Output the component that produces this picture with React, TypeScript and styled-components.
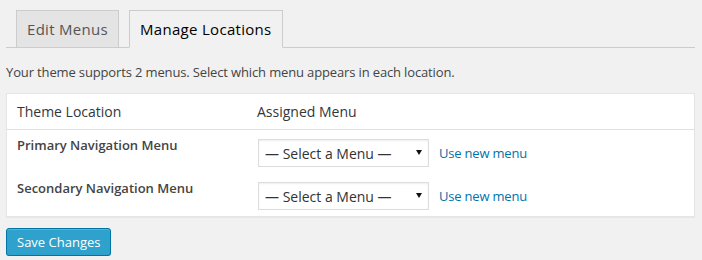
import React from "react";
import styled, { createGlobalStyle } from "styled-components";

const Global = createGlobalStyle`
  html, body { margin: 0; padding: 0; background: #f1f1f1; }
  body { font-family: "Open Sans", "Noto Sans", sans-serif; color: #444; font-size: 13px; }
`;

const Page = styled.div`
  padding: 0 7px 0 6px;
`;

const TabBar = styled.div`
  display: flex;
  gap: 10px;
  padding: 10px 0 0 10px;
  border-bottom: 1px solid #ccc;
`;

const Tab = styled.a<{ $active?: boolean }>`
  display: block;
  margin-bottom: -1px;
  padding: 6px 10px;
  line-height: 24px;
  font-size: 15px;
  letter-spacing: 0.3px;
  border: 1px solid #ccc;
  border-bottom-color: ${(p) => (p.$active ? "#f1f1f1" : "#ccc")};
  background: ${(p) => (p.$active ? "#f1f1f1" : "#e4e4e4")};
  color: ${(p) => (p.$active ? "#000" : "#555")};
  text-decoration: none;
  cursor: pointer;
`;

const Description = styled.p`
  margin: 14px 0 11px;
  line-height: 20px;
  font-size: 13px;
  letter-spacing: -0.14px;
  color: #444;
`;

const Table = styled.table`
  width: 100%;
  border-collapse: separate;
  border-spacing: 0;
  background: #fff;
  border: 1px solid #e5e5e5;
  box-shadow: 0 1px 1px rgba(0, 0, 0, 0.04);
`;

const HeadCell = styled.th<{ $w?: number }>`
  text-align: left;
  font-weight: 400;
  font-size: 14px;
  line-height: 19px;
  padding: 8px 10px;
  color: #32373c;
  border-bottom: 1px solid #e1e1e1;
  width: ${(p) => (p.$w ? `${p.$w}px` : "auto")};
`;

const RowLabel = styled.th`
  text-align: left;
  vertical-align: top;
  font-weight: 600;
  font-size: 13px;
  line-height: 19.5px;
  padding: 6px 10px;
  color: #444;
`;

const Cell = styled.td`
  vertical-align: top;
  padding: 9px 10px 6px 11px;
`;

const Controls = styled.div`
  display: flex;
  align-items: center;
  gap: 10px;
`;

const SelectWrap = styled.div`
  position: relative;
  width: 171px;
  height: 28px;
`;

const Select = styled.select`
  appearance: none;
  -webkit-appearance: none;
  box-sizing: border-box;
  width: 100%;
  height: 28px;
  margin: 0;
  padding: 0 20px 0 6px;
  border: 1px solid #ddd;
  border-radius: 0;
  background: #fff;
  box-shadow: inset 0 1px 2px rgba(0, 0, 0, 0.07);
  font-family: "Open Sans", "Noto Sans", sans-serif;
  font-size: 14px;
  color: #333;
  outline: none;
`;

const Arrow = styled.svg`
  position: absolute;
  right: 7px;
  top: 11px;
  width: 6px;
  height: 5px;
  pointer-events: none;
`;

const Link = styled.a`
  color: #0073aa;
  font-size: 13px;
  line-height: 19px;
  letter-spacing: -0.2px;
  text-decoration: none;
`;

const SaveButton = styled.button`
  margin-top: 11px;
  height: 28px;
  padding: 0 10px;
  font-family: "Open Sans", "Noto Sans", sans-serif;
  font-size: 13px;
  line-height: 26px;
  color: #fff;
  background: #2ea2cc;
  border: 1px solid #0074a2;
  border-radius: 3px;
  box-shadow: inset 0 1px 0 rgba(120, 200, 230, 0.5), 0 1px 0 rgba(0, 0, 0, 0.15);
  cursor: pointer;
`;

const locations = ["Primary Navigation Menu", "Secondary Navigation Menu"];

export default function App() {
  return (
    <Page>
      <Global />
      <TabBar>
        <Tab>Edit Menus</Tab>
        <Tab $active>Manage Locations</Tab>
      </TabBar>
      <Description>
        Your theme supports 2 menus. Select which menu appears in each location.
      </Description>
      <Table>
        <thead>
          <tr>
            <HeadCell $w={220}>Theme Location</HeadCell>
            <HeadCell>Assigned Menu</HeadCell>
          </tr>
        </thead>
        <tbody>
          {locations.map((loc) => (
            <tr key={loc}>
              <RowLabel>{loc}</RowLabel>
              <Cell>
                <Controls>
                  <SelectWrap>
                    <Select defaultValue="0">
                      <option value="0">— Select a Menu —</option>
                    </Select>
                    <Arrow viewBox="0 0 6 5">
                      <path d="M0 0 H6 L3 5 Z" fill="#111" />
                    </Arrow>
                  </SelectWrap>
                  <Link href="#">Use new menu</Link>
                </Controls>
              </Cell>
            </tr>
          ))}
        </tbody>
      </Table>
      <SaveButton>Save Changes</SaveButton>
    </Page>
  );
}
